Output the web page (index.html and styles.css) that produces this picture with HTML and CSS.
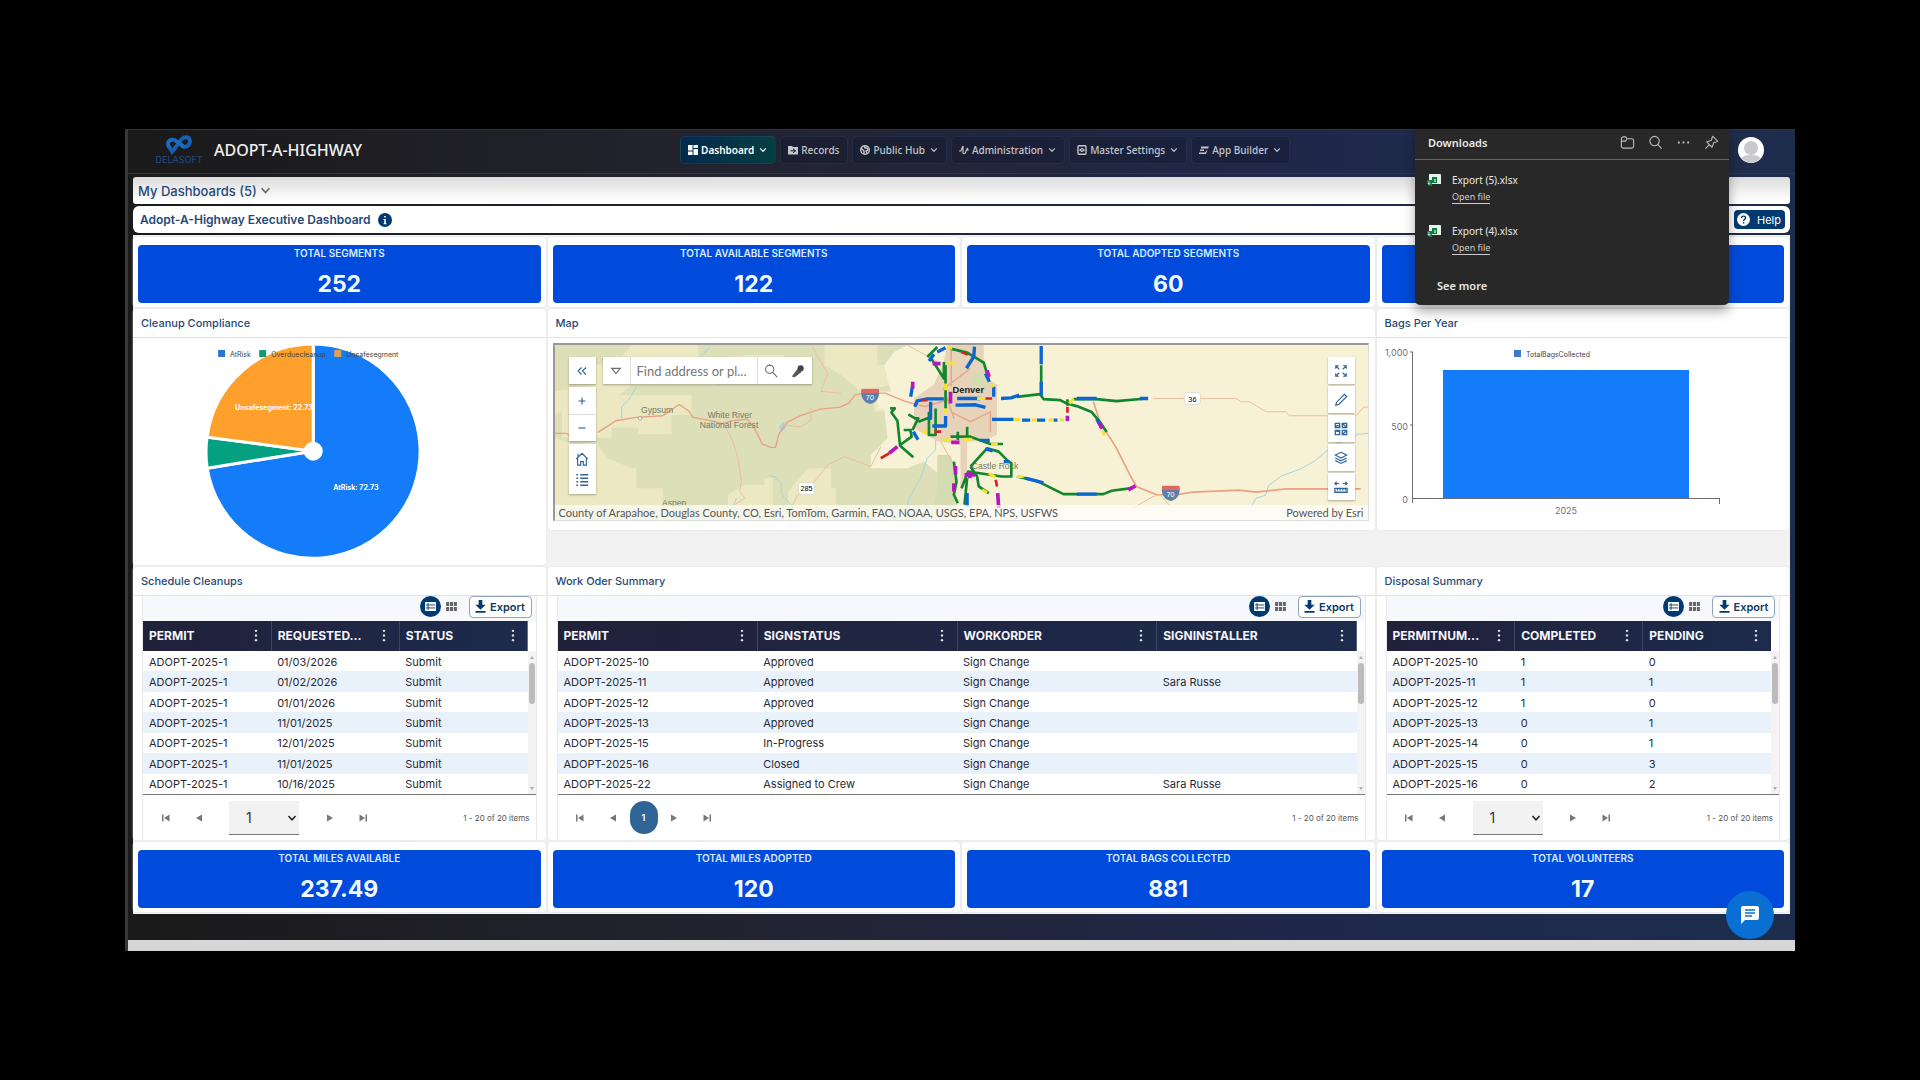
FILE: index.html
```
<!DOCTYPE html>
<html lang="en">
<head>
    <meta charset="UTF-8">
    <meta name="viewport" content="width=device-width, initial-scale=1.0">
    <title>Adopt-A-Highway</title>
    <link rel="stylesheet" href="styles.css">
</head>
<body>
    <!-- shared icons -->
    <svg class="sprite" aria-hidden="true">
        <symbol id="chevron" viewBox="0 0 10 10"><path d="M1.500 3l3.500 3.800L8.500 3" fill="none" stroke="currentColor" stroke-width="1.500"/></symbol>
        <symbol id="list" viewBox="0 0 12 10"><path d="M0 0h12v10H0z" fill="#fff"/><path d="M1 3.300h10M1 6.600h10M3.300 1v8" stroke="#003a70" stroke-width="1"/></symbol>
        <symbol id="cells" viewBox="0 0 12 10"><path d="M0 0h3.400v4.500H0zM4.300 0h3.400v4.500H4.300zM8.600 0H12v4.500H8.600zM0 5.500h3.400V10H0zM4.300 5.500h3.400V10H4.300zM8.600 5.500H12V10H8.600z" fill="#666"/></symbol>
        <symbol id="download" viewBox="0 0 12 14"><path d="M4 0h4v5h3.600L6 10.500.400 5H4zM.500 12h11v1.800H.500z" fill="#003a70"/></symbol>
        <symbol id="dots" viewBox="0 0 4 14"><circle cx="2" cy="2" r="1.300"/><circle cx="2" cy="7" r="1.300"/><circle cx="2" cy="12" r="1.300"/></symbol>
        <symbol id="first" viewBox="0 0 8 8"><path d="M0 .5h1.500v7H0zM7.500.5v7L2 4z"/></symbol>
        <symbol id="prev" viewBox="0 0 8 8"><path d="M7 .5v7L1 4z"/></symbol>
        <symbol id="next" viewBox="0 0 8 8"><path d="M1 .5v7L7 4z"/></symbol>
        <symbol id="last" viewBox="0 0 8 8"><path d="M6.500.5H8v7H6.500zM.500.5v7L6 4z"/></symbol>
        <symbol id="excel" viewBox="0 0 14 12"><path d="M2 0h11a1 1 0 0 1 1 1v9H2z" fill="#e4f2e9"/><path d="M5 3h5v6H5z" fill="#0e7a41"/><path d="M7 5h2v3H7z" fill="#7ecb9d"/><path d="M0 6h5v6H2L0 9z" fill="#107c41"/><path d="M2 7v3M1 9l1 1.500L3.500 9" stroke="#fff" stroke-width=".7" fill="none"/></symbol>
    </svg>

    <div class="app">
        <header class="topbar">
            <div class="logo">
                <svg viewBox="0 0 74 60" width="26" height="21"><path d="M24 42L42 18C50 7 65 6 68 18C70 32 55 42 46 33L34 24" fill="none" stroke="#1560b4" stroke-width="11"/><path d="M52 38L30 21C18 11 4 18 6 31C7 38 12 42 18 49" fill="none" stroke="#1a6cc6" stroke-width="11"/><path d="M4 34L16 60L32 42L26 32L17 42z" fill="#1560b4"/></svg>
                <span class="logo-text">DELASOFT</span>
            </div>
            <h1 class="app-name">ADOPT-A-HIGHWAY</h1>
            <nav class="menu">
                <button class="menu-item active"><svg viewBox="0 0 10 10" width="10" height="10"><path d="M0 0h4.500v5.500H0zM0 6.500h4.500V10H0zM5.500 0H10v3H5.500zM5.500 4H10v6H5.500z" fill="currentColor"/></svg>Dashboard<svg class="chev"><use href="#chevron"/></svg></button>
                <button class="menu-item"><svg viewBox="0 0 10 10" width="10" height="10"><path d="M0 1h4l1 1h5v7.500H0z" fill="currentColor"/><path d="M2.500 5.800h5M5 3.800l2.500 2L5 7.800" stroke="#1b1c26" fill="none"/></svg>Records</button>
                <button class="menu-item"><svg viewBox="0 0 10 10" width="10" height="10"><circle cx="5" cy="5" r="4.300" fill="none" stroke="currentColor" stroke-width="1.400"/><path d="M1 3l3 3v3M4 1l1 2h2l1 2-2 1 1 2" fill="none" stroke="currentColor" stroke-width="1.400"/></svg>Public Hub<svg class="chev"><use href="#chevron"/></svg></button>
                <button class="menu-item"><svg viewBox="0 0 10 10" width="10" height="10"><path d="M0 6h1.800L4 1v7.500M4 8.500h2L8.500 3v2H10" fill="none" stroke="currentColor" stroke-width="1.200"/></svg>Administration<svg class="chev"><use href="#chevron"/></svg></button>
                <button class="menu-item"><svg viewBox="0 0 10 10" width="10" height="10"><rect x="1" y=".7" width="8" height="8.600" rx="1" fill="none" stroke="currentColor" stroke-width="1.400"/><circle cx="5" cy="5" r="1.600" fill="none" stroke="currentColor"/><path d="M2 5h6" stroke="currentColor"/></svg>Master Settings<svg class="chev"><use href="#chevron"/></svg></button>
                <button class="menu-item"><svg viewBox="0 0 10 10" width="10" height="10"><path d="M2 1.500h8L9 3.500H2zM1 4.500h4v1.500H1zM0 7.500h6l2.500-3L7 9H0z" fill="currentColor"/></svg>App Builder<svg class="chev"><use href="#chevron"/></svg></button>
            </nav>
            <svg class="avatar" viewBox="0 0 26 26"><circle cx="13" cy="13" r="13" fill="#fff"/><path d="M3.500 21.500a13 13 0 0 0 19 0c-2-3-5-3.500-9.500-3.500s-7.500.5-9.500 3.500z" fill="#c9c9ce"/><circle cx="13" cy="11" r="7" fill="#c9c9ce"/></svg>
        </header>

        <main class="content">
            <div class="bar bar-list"><button class="plain">My Dashboards (5)<svg class="chev-lg"><use href="#chevron"/></svg></button></div>
            <div class="bar bar-title">
                <h2>Adopt-A-Highway Executive Dashboard</h2>
                <svg viewBox="0 0 14 14" width="14" height="14"><circle cx="7" cy="7" r="7" fill="#003a70"/><path d="M6.200 3h1.600v1.600H6.200zM5.500 6h2.300v4.200h.7v1h-3v-1h.7V7h-.7z" fill="#fff"/></svg>
                <button class="help"><svg viewBox="0 0 14 14" width="13" height="13"><circle cx="7" cy="7" r="7" fill="#fff"/><path d="M4.900 5.500C5 2.600 9.200 2.800 9.200 5.300 9.200 6.900 7.100 6.800 7.100 8.600M7.100 9.700v1.600" fill="none" stroke="#003a70" stroke-width="1.500"/></svg>Help</button>
            </div>

            <div class="grid">
                <section class="tile"><div class="kpi"><h3>TOTAL SEGMENTS</h3><p>252</p></div></section>
                <section class="tile"><div class="kpi"><h3>TOTAL AVAILABLE SEGMENTS</h3><p>122</p></div></section>
                <section class="tile"><div class="kpi"><h3>TOTAL ADOPTED SEGMENTS</h3><p>60</p></div></section>
                <section class="tile"><div class="kpi"></div></section>

                <section class="panel">
                    <h3>Cleanup Compliance</h3>
                    <svg class="pie" viewBox="0 0 412 226" preserveAspectRatio="xMinYMin">
                        <g transform="translate(180 113)" stroke="#fff" stroke-width="3">
                            <path d="M0 0V-107A107 107 0 1 1-105.900 17z" fill="#147cf8"/>
                            <path d="M0 0L-105.900 17A107 107 0 0 1-106-14z" fill="#03a182"/>
                            <path d="M0 0L-106-14A107 107 0 0 1 0-107z" fill="#ffa02c"/>
                            <circle r="8" fill="#fff"/>
                        </g>
                        <path d="M85 12h7v7h-7z" fill="#2877d8"/>
                        <path d="M126 12h7v7h-7z" fill="#149b73"/>
                        <path d="M201 12h7v7h-7z" fill="#dda055"/>
                        <g class="legend">
                            <text x="97" y="19">AtRisk</text>
                            <text x="138" y="19">Overduecleanup</text>
                            <text x="213" y="19">Unsafesegment</text>
                        </g>
                        <g class="slice-label">
                            <text x="102" y="72">Unsafesegment: 22.73</text>
                            <text x="200" y="152">AtRisk: 72.73</text>
                        </g>
                    </svg>
                </section>

                <section class="panel wide">
                    <h3>Map</h3>
                    <div class="map">
                        <svg class="map-canvas" viewBox="39 99 2448 534" preserveAspectRatio="xMinYMin slice">
                            <path d="M39 99h2448v534H39z" fill="#dddfb9"/>
                            <!-- open land -->
                            <g fill="#ebe8c2">
                                <path d="M270 99h200v40h60l90-10h110v30l-60 30h-60V200H600l-90 20H270l-40 30h220v60h-60v58H290v-20h-80v30H60v-80l-21 10v-70l120-20v-60h60z"/>
                                <path d="M39 380l60 20 60-10 40 50 70 30h15v60h80v60H39z"/>
                                <path d="M850 99h160v60h40v60l-90 20-60-50-50-30z"/>
                                <path d="M560 550l50-30h60v-20h24v90H560zM800 470h70v60h15v60H740v-50z"/>
                                <path d="M1000 240h40v60h-40z"/>
                            </g>
                            <path d="M1100 99h1387v534H1250V560l-40-60-60-50-50 20h-110v-40l50-50-10-90h-20v-50h40l-20-80 30-40z" fill="#f7f1d5"/>
                            <path d="M1190 430h40l20 60-20 143h-60l20-100z" fill="#d5dcb1"/>
                            <path d="M1220 99h110v90l40 30v150l-40 20h-50v130l-20 20v-140l-70-10-70-40v-90l60-40 30-70z" fill="#e7d3b9"/>
                            <path d="M1290 190l50-20v50l-40 20z" fill="#d5dcb1"/>
                            <!-- rivers -->
                            <g fill="none" stroke="#a7d3dc" stroke-width="3">
                                <path d="M505 104l-30 35M285 225l-25 40-20 20v35M685 492l20 5 15 20v30l35 40M1185 385v30l-25 25-20 60-35 60-5 25M585 560l-10 30"/>
                                <path d="M2487 365l-35 3-5 10-60 20-60 50-45 25-55 20-40 30-8 28-30 10-15 30"/>
                                <path d="M715 345l12-14 8 14-14 14z" fill="#a7d3dc"/>
                            </g>
                            <!-- roads -->
                            <g fill="none" stroke="#e9a184" stroke-width="4">
                                <path d="M39 365h35l12 10M168 362l55-35 60-10 80-5 50-34 30 20 10 18 60 12 30 8 25-8 50-6 20 25 25 50 25 10h15l10-40 25-35 40-20 60-20 60-6 25-12 20-25 30-5h60l60 25 60 15 70-20"/>
                                <path d="M1660 270l20 60 50 80 40 80 20 35 60 25 60 0 50-8 140-6 50 6 90-10h225" stroke-width="5"/>
                                <path d="M1232 104v120M1290 170l-80 60 30 90M1230 300l60 30 60-30v60"/>
                            </g>
                            <g fill="none" stroke="#ecbda0" stroke-width="3">
                                <path d="M545 330l30 60 15 50 10 70-5 30 15 20-30 20M720 340l60 5 30-20v-35M815 104l15 30 30 50-20 55 60 5M750 590l20-40 50-40 40-50 50-25 80 30 30-60M1100 99l90 50M1200 390l40 70"/>
                                <path d="M1840 260h250l15 10h25l50 30h60l10 12h200l25-26h12M1780 590l60-35 20-5 35 37"/>
                            </g>
                            <g class="map-label">
                                <text x="298" y="304">Gypsum</text>
                                <text x="498" y="318">White River</text>
                                <text x="475" y="350">National Forest</text>
                                <text x="361" y="584">Aspen</text>
                                <text x="1294" y="471">Castle Rock</text>
                            </g>
                            <circle cx="295" cy="320" r="5" fill="#fff" stroke="#888" stroke-width="2"/>
                            <!-- adopted segments -->
                            <g fill="none" stroke-width="8" stroke-linejoin="round">
                                <g stroke="#12862d">
                                    <path d="M1048 290h14l-10 12 18 25 8 75 40 35M1078 400l35-25-4-20h-20M1115 355l18-35h-10l-20-12M1133 330l40-15M1160 135l30-30M1172 140l38 60V150M1165 300v70h20v-80M1215 160v130M1240 450l8 60-8 40 12 25"/>
                                    <path d="M1230 110l50 12 50 30 15 50M1503 160v90M1430 255l70-8 10 15 50 3 20 10 30 8 45 18 25 30 20 30M1600 262h70l60 6 90-8M1582 262v20M1230 375h60l60 22h38M1280 345v40M1252 360v25"/>
                                    <path d="M1290 465l50-55 35 10 30 30 8 5v40h-30l-100-15-20 50M1290 465l20 30 5 30 30 20M1430 495l60 13 80 40h120l25-10 60-8M1280 500l-8 80"/>
                                </g>
                                <g stroke="#0b66d4" stroke-width="10">
                                    <path d="M1115 225l-5 30M1122 285l8-18 30-6h50M1170 270v50h-10M1175 343h40v-30M1118 360l14 24M1190 120l25-13M1165 147l15-20"/>
                                    <path d="M1503 102v55M1503 210v42M1382 260l30-2 25-8M1610 260h60M1800 260h25M1355 323h65M1445 325h25M1490 325h25M1540 325h12M1250 260h70M1245 280l60-1 30 8M1360 225v30M1302 104l-2 30-22 35M1335 185l12 25M1670 322l14 25M1318 386h30M1335 412l22 6M1455 500l55 14M1610 548h60M1390 450h18M1280 545v40"/>
                                </g>
                                <g stroke="#f6e52e" stroke-width="9">
                                    <path d="M1220 108h15M1215 215v20M1215 290v15M1220 153h22M1205 385h25M1145 360h14M1270 383h25M1600 260l-12 15M1420 323h20M1475 325h14M1525 325h15M1558 325h14M1310 260h30M1355 217v10M1352 398h20M1430 495h20M1687 357l6 14M1345 485l20 12M1325 535l15 8"/>
                                </g>
                                <g stroke="#b317bd" stroke-width="11">
                                    <path d="M1116 210v20M1070 405l-25 20M1176 155h24M1230 240v35M1232 392h25M1245 463v26M1240 515v25M1272 490h32M1340 175l6 20M1582 312v16M1678 333l8 18M1765 535l22-12M1372 545l3 45M1288 480v20"/>
                                </g>
                                <path stroke="#d52326" d="M1045 425l-25 15M1145 265h16M1182 360h20M1262 120l20 8M1582 285v18M1335 260h20M1366 505l4 20"/>
                            </g>
                            <text class="map-city" x="1236" y="245">Denver</text>
                            <!-- shields -->
                            <g class="shield">
                                <path d="M962 234h52c4 22-6 38-26 43-20-5-30-21-26-43z" fill="#5b7fa8"/><path d="M962 231h52v13h-52z" fill="#dd6a62"/><text x="975" y="265" fill="#fff">70</text>
                                <path d="M1867 526h52c4 22-6 38-26 43-20-5-30-21-26-43z" fill="#5b7fa8"/><path d="M1867 523h52v13h-52z" fill="#dd6a62"/><text x="1880" y="558" fill="#fff">70</text>
                                <rect x="772" y="513" width="48" height="36" rx="8" fill="#fff" stroke="#aaa"/><text x="778" y="540">285</text>
                                <rect x="1934" y="242" width="48" height="36" rx="8" fill="#fff" stroke="#aaa"/><text x="1946" y="270">36</text>
                            </g>
                        </svg>
                        <div class="map-left">
                            <div class="map-col">
                                <button class="tool" aria-label="Collapse"><svg viewBox="0 0 16 16"><path d="M7.500 4L3.500 8l4 4M12.500 4l-4 4 4 4"/></svg></button>
                                <div class="tool-group">
                                    <button class="tool" aria-label="Zoom in"><svg viewBox="0 0 16 16"><path d="M8 4v8M4 8h8"/></svg></button>
                                    <button class="tool" aria-label="Zoom out"><svg viewBox="0 0 16 16"><path d="M4 8h8"/></svg></button>
                                </div>
                                <div class="tool-group tight">
                                    <button class="tool" aria-label="Home"><svg viewBox="0 0 16 16"><path d="M1.500 8L8 1.500 14.500 8M3 7v8h3.500v-4h3v4H13V7M3.500 5V2"/></svg></button>
                                    <button class="tool" aria-label="Legend"><svg viewBox="0 0 16 16"><path d="M6 2h9M6 6h9M6 10h9M6 14h9M1.500 2h2M1.500 6h2M1.500 10h2M1.500 14h2" stroke-width="1.800"/></svg></button>
                                </div>
                            </div>
                            <div class="search">
                                <button class="tool" aria-label="Search in"><svg viewBox="0 0 16 16" class="grey"><path d="M3 5h10l-5 6z"/></svg></button>
                                <input type="text" aria-label="Find address or place" placeholder="Find address or pl...">
                                <button class="tool" aria-label="Search"><svg viewBox="0 0 16 16" class="grey"><circle cx="6.500" cy="6" r="4.700"/><path d="M10 9.500l5 5.500"/></svg></button>
                                <button class="tool" aria-label="Speak"><svg viewBox="0 0 16 16"><path d="M8 6l3 3-7 5.500L2 14z" fill="#555" stroke="#555"/><circle cx="11" cy="5" r="3.500" fill="#4a4050" stroke="none"/></svg></button>
                            </div>
                        </div>
                        <div class="map-right">
                            <button class="tool" aria-label="Full screen"><svg viewBox="0 0 16 16"><path d="M2 5.500V2h3.500M2 2l4 4M10.500 2H14v3.500M14 2l-4 4M2 10.500V14h3.500M2 14l4-4M14 10.500V14h-3.500M14 14l-4-4"/></svg></button>
                            <button class="tool" aria-label="Edit"><svg viewBox="0 0 16 16"><path d="M2 14l1-3.500 9-9 2.500 2.500-9 9z"/></svg></button>
                            <button class="tool" aria-label="Basemaps"><svg viewBox="0 0 16 16"><path d="M1.500 1.500h5v5h-5zM9.500 1.500h5v5h-5zM1.500 9.500h5v5h-5zM9.500 9.500h5v5h-5zM2 5l2-1 2 1M10 2l4 4M2 10l4 1M10 14l4-4" stroke-width="1.500"/></svg></button>
                            <button class="tool" aria-label="Layers"><svg viewBox="0 0 16 16"><path d="M8 1.500l6.500 3.200L8 8 1.500 4.700zM1.500 8L8 11.200 14.500 8M1.500 11L8 14.200l6.500-3.200"/></svg></button>
                            <button class="tool" aria-label="Measure"><svg viewBox="0 0 16 16"><path d="M1 4h5M3 2L1 4l2 2M10 4h5M13 2l2 2-2 2"/><path d="M1 9.500h14V14H1zM4 10v2M7 10v2M10 10v2M13 10v2" stroke-width="1.500"/></svg></button>
                        </div>
                        <div class="attribution">
                            <span>County of Arapahoe, Douglas County, CO, Esri, TomTom, Garmin, FAO, NOAA, USGS, EPA, NPS, USFWS</span>
                            <span>Powered by Esri</span>
                        </div>
                    </div>
                </section>

                <section class="panel">
                    <h3>Bags Per Year</h3>
                    <svg class="bars" viewBox="0 0 412 192" preserveAspectRatio="xMinYMin">
                        <path d="M66 32h246v128H66z" fill="#147cf8"/>
                        <path d="M33 14h3M33 87h3M35.500 14v151M35 160.500h308M342.500 160v6" fill="none" stroke="#6b6b78"/>
                        <path d="M137 12h7v7h-7z" fill="#3c7acb"/>
                        <g class="legend"><text x="149" y="19">TotalBagsCollected</text></g>
                        <g class="axis">
                            <text x="31" y="18" text-anchor="end">1,000</text>
                            <text x="31" y="92" text-anchor="end">500</text>
                            <text x="31" y="165" text-anchor="end">0</text>
                            <text x="189" y="176" text-anchor="middle">2025</text>
                        </g>
                    </svg>
                </section>

                <section class="panel">
                    <h3>Schedule Cleanups</h3>
                    <div class="report">
                        <div class="toolbar">
                            <button class="view on" aria-label="List view"><svg><use href="#list"/></svg></button>
                            <button class="view" aria-label="Grid view"><svg><use href="#cells"/></svg></button>
                            <button class="export"><svg><use href="#download"/></svg>Export</button>
                        </div>
                        <div class="rows">
                            <table>
                                <thead><tr><th>PERMIT<svg><use href="#dots"/></svg></th><th>REQUESTED...<svg><use href="#dots"/></svg></th><th>STATUS<svg><use href="#dots"/></svg></th></tr></thead>
                                <tbody>
                                    <tr><td>ADOPT-2025-1</td><td>01/03/2026</td><td>Submit</td></tr>
                                    <tr><td>ADOPT-2025-1</td><td>01/02/2026</td><td>Submit</td></tr>
                                    <tr><td>ADOPT-2025-1</td><td>01/01/2026</td><td>Submit</td></tr>
                                    <tr><td>ADOPT-2025-1</td><td>11/01/2025</td><td>Submit</td></tr>
                                    <tr><td>ADOPT-2025-1</td><td>12/01/2025</td><td>Submit</td></tr>
                                    <tr><td>ADOPT-2025-1</td><td>11/01/2025</td><td>Submit</td></tr>
                                    <tr><td>ADOPT-2025-1</td><td>10/16/2025</td><td>Submit</td></tr>
                                </tbody>
                            </table>
                            <div class="scroll"><i></i></div>
                        </div>
                        <div class="pager">
                            <button aria-label="First page"><svg><use href="#first"/></svg></button>
                            <button aria-label="Previous page"><svg><use href="#prev"/></svg></button>
                            <div class="page-select"><select aria-label="Page"><option>1</option></select><svg><use href="#chevron"/></svg></div>
                            <button aria-label="Next page"><svg><use href="#next"/></svg></button>
                            <button aria-label="Last page"><svg><use href="#last"/></svg></button>
                            <span>1 - 20 of 20 items</span>
                        </div>
                    </div>
                </section>

                <section class="panel wide">
                    <h3>Work Oder Summary</h3>
                    <div class="report">
                        <div class="toolbar">
                            <button class="view on" aria-label="List view"><svg><use href="#list"/></svg></button>
                            <button class="view" aria-label="Grid view"><svg><use href="#cells"/></svg></button>
                            <button class="export"><svg><use href="#download"/></svg>Export</button>
                        </div>
                        <div class="rows">
                            <table>
                                <thead><tr><th>PERMIT<svg><use href="#dots"/></svg></th><th>SIGNSTATUS<svg><use href="#dots"/></svg></th><th>WORKORDER<svg><use href="#dots"/></svg></th><th>SIGNINSTALLER<svg><use href="#dots"/></svg></th></tr></thead>
                                <tbody>
                                    <tr><td>ADOPT-2025-10</td><td>Approved</td><td>Sign Change</td><td></td></tr>
                                    <tr><td>ADOPT-2025-11</td><td>Approved</td><td>Sign Change</td><td>Sara Russe</td></tr>
                                    <tr><td>ADOPT-2025-12</td><td>Approved</td><td>Sign Change</td><td></td></tr>
                                    <tr><td>ADOPT-2025-13</td><td>Approved</td><td>Sign Change</td><td></td></tr>
                                    <tr><td>ADOPT-2025-15</td><td>In-Progress</td><td>Sign Change</td><td></td></tr>
                                    <tr><td>ADOPT-2025-16</td><td>Closed</td><td>Sign Change</td><td></td></tr>
                                    <tr><td>ADOPT-2025-22</td><td>Assigned to Crew</td><td>Sign Change</td><td>Sara Russe</td></tr>
                                </tbody>
                            </table>
                            <div class="scroll"><i></i></div>
                        </div>
                        <div class="pager">
                            <button aria-label="First page"><svg><use href="#first"/></svg></button>
                            <button aria-label="Previous page"><svg><use href="#prev"/></svg></button>
                            <button class="current">1</button>
                            <button aria-label="Next page"><svg><use href="#next"/></svg></button>
                            <button aria-label="Last page"><svg><use href="#last"/></svg></button>
                            <span>1 - 20 of 20 items</span>
                        </div>
                    </div>
                </section>

                <section class="panel">
                    <h3>Disposal Summary</h3>
                    <div class="report">
                        <div class="toolbar">
                            <button class="view on" aria-label="List view"><svg><use href="#list"/></svg></button>
                            <button class="view" aria-label="Grid view"><svg><use href="#cells"/></svg></button>
                            <button class="export"><svg><use href="#download"/></svg>Export</button>
                        </div>
                        <div class="rows">
                            <table>
                                <thead><tr><th>PERMITNUM...<svg><use href="#dots"/></svg></th><th>COMPLETED<svg><use href="#dots"/></svg></th><th>PENDING<svg><use href="#dots"/></svg></th></tr></thead>
                                <tbody>
                                    <tr><td>ADOPT-2025-10</td><td>1</td><td>0</td></tr>
                                    <tr><td>ADOPT-2025-11</td><td>1</td><td>1</td></tr>
                                    <tr><td>ADOPT-2025-12</td><td>1</td><td>0</td></tr>
                                    <tr><td>ADOPT-2025-13</td><td>0</td><td>1</td></tr>
                                    <tr><td>ADOPT-2025-14</td><td>0</td><td>1</td></tr>
                                    <tr><td>ADOPT-2025-15</td><td>0</td><td>3</td></tr>
                                    <tr><td>ADOPT-2025-16</td><td>0</td><td>2</td></tr>
                                </tbody>
                            </table>
                            <div class="scroll"><i></i></div>
                        </div>
                        <div class="pager">
                            <button aria-label="First page"><svg><use href="#first"/></svg></button>
                            <button aria-label="Previous page"><svg><use href="#prev"/></svg></button>
                            <div class="page-select"><select aria-label="Page"><option>1</option></select><svg><use href="#chevron"/></svg></div>
                            <button aria-label="Next page"><svg><use href="#next"/></svg></button>
                            <button aria-label="Last page"><svg><use href="#last"/></svg></button>
                            <span>1 - 20 of 20 items</span>
                        </div>
                    </div>
                </section>

                <section class="tile"><div class="kpi"><h3>TOTAL MILES AVAILABLE</h3><p>237.49</p></div></section>
                <section class="tile"><div class="kpi"><h3>TOTAL MILES ADOPTED</h3><p>120</p></div></section>
                <section class="tile"><div class="kpi"><h3>TOTAL BAGS COLLECTED</h3><p>881</p></div></section>
                <section class="tile"><div class="kpi"><h3>TOTAL VOLUNTEERS</h3><p>17</p></div></section>
            </div>
        </main>
        <footer class="footer"></footer>

        <button class="chat" aria-label="Chat"><svg viewBox="0 0 20 20" width="20" height="20"><path d="M3 1h14a2 2 0 0 1 2 2v10a2 2 0 0 1-2 2H5l-4 4V3a2 2 0 0 1 2-2z" fill="#fff"/><path d="M5 5h10M5 8h10M5 11h7" stroke="#0a6fd2" stroke-width="1.600"/></svg></button>

        <aside class="downloads">
            <div class="downloads-head">
                <h2>Downloads</h2>
                <button aria-label="Open folder"><svg viewBox="0 0 16 16"><path d="M1.500 4a2 2 0 0 1 2-2H6l1.500 2h5a2 2 0 0 1 2 2v6a2 2 0 0 1-2 2h-9a2 2 0 0 1-2-2zM2 6.500h4L7.500 4"/></svg></button>
                <button aria-label="Search"><svg viewBox="0 0 16 16"><circle cx="7" cy="6.500" r="5"/><path d="M10.500 10l4 4.500"/></svg></button>
                <button aria-label="More"><svg viewBox="0 0 16 16"><path d="M2 8h2M7 8h2M12 8h2" stroke-width="2"/></svg></button>
                <button aria-label="Pin"><svg viewBox="0 0 16 16"><path d="M9.500 1.500l5 5-1.500 1-2.500.5-2 5-5.500-5.500 5-2 .5-2.500zM5.500 10.500l-4 4"/></svg></button>
            </div>
            <ul>
                <li><svg><use href="#excel"/></svg><div>Export (5).xlsx<a href="#">Open file</a></div></li>
                <li><svg><use href="#excel"/></svg><div>Export (4).xlsx<a href="#">Open file</a></div></li>
            </ul>
            <button class="more">See more</button>
        </aside>
    </div>
</body>
</html>
```
FILE: styles.css
```
* {
  box-sizing: border-box;
}

body {
  margin: 0;
  padding: 129px 125px;
  background: #000;
  font-family: Inter, "Liberation Sans", sans-serif;
  font-size: 11px;
  color: #222;
}

h1, h2, h3, p, ul {
  margin: 0;
  padding: 0;
}

button {
  border: 0;
  padding: 0;
  background: none;
  font: inherit;
  color: inherit;
}

svg {
  flex: none;
}

.sprite {
  display: none;
}

.app {
  position: relative;
  border-left: 3px solid #393939;
  background: linear-gradient(90deg, #1a1a1a, #23232f 35%, #20284a 70%, #1d2d4c);
}

/* top bar */
.topbar {
  display: flex;
  align-items: center;
  height: 45px;
  padding: 0 31px 4px 29px;
  border-top: 1px solid #33333a;
  border-bottom: 1px solid #35353d;
  font-family: "Noto Sans", sans-serif;
}

.logo {
  display: flex;
  flex-direction: column;
  align-items: center;
  width: 44px;
}

.logo-text {
  color: #1b4f87;
  font: 9px/10px Inter, sans-serif;
}

.app-name {
  margin-left: 13px;
  color: #f0f0f0;
  font-size: 16px;
  font-weight: 500;
}

.menu {
  display: flex;
  gap: 4px;
  margin: 0 auto 0 318px;
}

.menu-item {
  display: flex;
  align-items: center;
  gap: 3px;
  height: 28px;
  padding: 0 8px 0 7px;
  border: 1px solid rgba(90, 130, 190, 0.15);
  border-radius: 5px;
  background: rgba(10, 20, 40, 0.3);
  color: #c3c6cd;
  font-size: 10px;
  font-weight: 500;
}

.menu-item.active {
  background: linear-gradient(90deg, #04294d, #063e41);
  color: #fff;
  font-weight: 600;
}

.chev {
  width: 8px;
  height: 8px;
  margin-left: 2px;
}

.avatar {
  width: 26px;
  height: 26px;
}

/* dashboard bars */
.content {
  margin: 3px 5px 0 5px;
}

.bar {
  display: flex;
  align-items: center;
  height: 27px;
  margin-bottom: 2px;
  padding: 0 5px;
  border-radius: 6px;
  background: #fff;
  color: #1f4a76;
}

.bar-list {
  border-radius: 3px;
  background: linear-gradient(#dcdcdc, #fff 90%);
}

.plain {
  display: flex;
  align-items: center;
  gap: 3px;
  font-size: 13px;
  font-weight: 500;
}

.chev-lg {
  width: 11px;
  height: 11px;
  color: #666;
}

.bar-title h2 {
  margin: 0 7px 0 2px;
  font-size: 12px;
  font-weight: 600;
}

.help {
  display: flex;
  align-items: center;
  gap: 7px;
  height: 19px;
  margin-left: auto;
  padding: 0 4px 0 3px;
  border-radius: 4px;
  background: #003a70;
  color: #fff;
  font-size: 11px;
}

/* dashboard grid */
.grid {
  display: grid;
  grid-template-columns: repeat(4, minmax(0, 1fr));
  gap: 2px;
  padding: 2px 1px 2px 0;
  background: #f2f2f2;
  align-items: start;
}

.tile,
.panel {
  border-radius: 4px;
  background: #fff;
  box-shadow: 0 0 2px #ddd;
}

.tile {
  padding: 8px 5px 4px;
}

.wide {
  grid-column: span 2;
}

.kpi {
  height: 58px;
  border-radius: 4px;
  background: #004bdb;
  color: #d9ecff;
  text-align: center;
}

.kpi h3 {
  font-size: 10px;
  font-weight: 600;
  line-height: 16px;
}

.kpi p {
  color: #f2faff;
  font-size: 23px;
  font-weight: 700;
  line-height: 46px;
}

.panel > h3 {
  height: 29px;
  padding-left: 8px;
  border-bottom: 1px solid #e2e2e6;
  color: #1f4a76;
  font-size: 11px;
  font-weight: 500;
  line-height: 28px;
}

/* charts */
.pie,
.bars {
  display: block;
  width: 100%;
  height: 227px;
}

.bars {
  height: 192px;
}

.legend {
  fill: #444;
  font-size: 7px;
}

.slice-label {
  fill: #fff;
  font-size: 7px;
  font-weight: 700;
}

.axis {
  fill: #70707c;
  font-size: 9px;
}

/* map */
.map {
  position: relative;
  height: 178px;
  margin: 5px 6px 9px 5px;
  border: 1px solid #ddd;
  border-top: 2px solid #999;
  border-left: 2px solid #999;
  overflow: hidden;
}

.map-canvas {
  position: absolute;
  inset: 0;
  width: 100%;
  height: 100%;
}

.map-label,
.map-city,
.shield {
  font-family: "Liberation Sans", sans-serif;
  font-size: 26px;
}

.map-label {
  fill: #777764;
}

.map-city {
  fill: #222;
  font-size: 28px;
  font-weight: 600;
}

.shield text {
  font-size: 22px;
}

.map-left {
  position: absolute;
  top: 12px;
  left: 14px;
  display: flex;
  align-items: flex-start;
  gap: 7px;
}

.map-right {
  position: absolute;
  top: 12px;
  right: 13px;
}

.map-col,
.map-right {
  display: flex;
  flex-direction: column;
  gap: 3px;
}

.map-right {
  gap: 2px;
}

.tool {
  display: flex;
  align-items: center;
  justify-content: center;
  width: 27px;
  height: 27px;
  background: #fff;
  box-shadow: 0 1px 2px rgba(0, 0, 0, 0.3);
}

.tool svg {
  width: 14px;
  height: 14px;
  fill: none;
  stroke: #2f6496;
  stroke-width: 1.3;
}

.tool .grey {
  stroke: #6e6e6e;
}

.tool-group,
.search {
  background: #fff;
  box-shadow: 0 1px 2px rgba(0, 0, 0, 0.3);
}

.tool-group .tool,
.search .tool {
  box-shadow: none;
}

.tool-group .tool + .tool {
  border-top: 1px solid #ddd;
}

.tight {
  padding: 4px 0;
}

.tight .tool {
  height: 21px;
}

.tight .tool + .tool {
  border-top: 0;
}

.search {
  display: flex;
}

.search input {
  width: 128px;
  padding: 0 6px;
  border: 1px solid #ddd;
  border-width: 0 1px;
  font: 13px Lato, sans-serif;
}

.search input::placeholder {
  color: #777;
}

.attribution {
  position: absolute;
  right: 0;
  bottom: 0;
  left: 0;
  display: flex;
  justify-content: space-between;
  padding: 0 4px;
  background: rgba(255, 255, 255, 0.7);
  color: #555;
  font: 11px/15px Lato, sans-serif;
}

/* reports */
.report {
  margin: 0 9px;
  border-right: 1px solid #e8e8ee;
  border-left: 1px solid #e8e8ee;
}

.toolbar {
  display: flex;
  align-items: center;
  justify-content: flex-end;
  height: 25px;
  padding: 0 4px 4px 0;
  background: #f7f8fc;
}

.view {
  display: flex;
  align-items: center;
  justify-content: center;
  width: 21px;
  height: 21px;
  border-radius: 50%;
}

.view.on {
  background: #003a70;
}

.view svg {
  width: 11px;
  height: 9px;
}

.export {
  display: flex;
  align-items: center;
  justify-content: center;
  gap: 4px;
  width: 63px;
  height: 22px;
  margin-left: 7px;
  border: 1px solid #8fa6bd;
  border-radius: 4px;
  background: #fff;
  color: #0f3a66;
  font-size: 11px;
  font-weight: 600;
}

.export svg {
  width: 11px;
  height: 13px;
}

.rows {
  display: flex;
  border-bottom: 1px solid #777;
}

table {
  width: 100%;
  height: 173px;
  border-collapse: collapse;
  table-layout: fixed;
}

th,
td {
  padding: 0 6px;
  text-align: left;
  white-space: nowrap;
}

thead tr {
  height: 30px;
  background: linear-gradient(90deg, #21213a, #1d2b4c);
}

th {
  position: relative;
  padding-bottom: 1px;
  border-right: 1px solid #3c4561;
  color: #f4f4f8;
  font-size: 12px;
  font-weight: 700;
}

th svg {
  position: absolute;
  top: 8px;
  right: 13px;
  width: 4px;
  height: 13px;
  fill: #ddd;
}

th:last-child {
  border-right: 0;
}

td {
  padding-top: 1px;
  color: #2a2a33;
  font-size: 11px;
  line-height: 14px;
}

tbody tr:nth-child(even) {
  background: #e9f1fa;
}

.scroll {
  flex: none;
  display: flex;
  flex-direction: column;
  align-items: center;
  justify-content: space-between;
  width: 8px;
  margin-top: 30px;
  padding: 5px 1px 4px;
  background: #f3f3f3;
}

.scroll i {
  width: 6px;
  height: 41px;
  margin: 4px 0 auto;
  border-radius: 3px;
  background: #bbb;
}

.scroll::before,
.scroll::after {
  content: "";
  border: 2px solid transparent;
}

.scroll::before {
  border-top: 0;
  border-bottom: 3px solid #aaa;
}

.scroll::after {
  border-top: 3px solid #aaa;
  border-bottom: 0;
}

.pager {
  display: flex;
  align-items: center;
  height: 45px;
  padding: 0 6px;
}

.pager button {
  width: 33px;
  height: 33px;
}

.pager svg {
  width: 8px;
  height: 8px;
  fill: #777;
}

.pager span {
  margin-left: auto;
  color: #555;
  font-size: 8px;
}

.pager .current {
  width: 28px;
  border-radius: 14px;
  background: #2f6496;
  color: #fff;
  font-size: 9px;
  font-weight: 600;
}

.page-select {
  display: flex;
  align-items: center;
  margin: 0 14px;
  position: relative;
}

.page-select select {
  appearance: none;
  width: 70px;
  height: 34px;
  padding-left: 17px;
  border: 0;
  border-bottom: 1px solid #777;
  background: #f2f2f2;
  color: #333;
  font: 14px Inter, sans-serif;
}

.page-select svg {
  position: absolute;
  right: 2px;
  width: 10px;
  height: 10px;
  fill: none;
  color: #222;
}

.footer {
  height: 37px;
  border-bottom: 11px solid #d6d6d6;
}

/* floating parts */
.chat {
  position: absolute;
  right: 21px;
  bottom: 12px;
  display: flex;
  align-items: center;
  justify-content: center;
  width: 48px;
  height: 48px;
  border-radius: 50%;
  background: #0a6fd2;
}

.downloads {
  position: absolute;
  top: 0;
  right: 66px;
  width: 314px;
  height: 176px;
  border-radius: 0 0 5px 5px;
  background: #282828;
  box-shadow: 0 6px 12px rgba(0, 0, 0, 0.35);
  color: #e8e8e8;
  font: 10px/16px "Noto Sans", sans-serif;
}

.downloads-head {
  display: flex;
  align-items: center;
  gap: 13px;
  height: 31px;
  padding: 0 10px 3px 13px;
  border-bottom: 1px solid #666;
}

.downloads-head h2,
.more {
  font-size: 11px;
  font-weight: 600;
}

.downloads-head h2 {
  margin-right: auto;
}

.downloads-head button {
  height: 15px;
}

.downloads-head svg {
  width: 15px;
  height: 15px;
  fill: none;
  stroke: #bbb;
  stroke-width: 1.2;
}

.downloads li {
  display: flex;
  gap: 11px;
  height: 51px;
  padding: 12px 12px 0;
}

.downloads li svg {
  width: 14px;
  height: 12px;
  margin-top: 2px;
}

.downloads a {
  display: block;
  width: max-content;
  margin-top: 3px;
  border-bottom: 1px solid #ccc;
  color: #ccc;
  font-size: 9px;
  line-height: 12px;
  text-decoration: none;
}

.more {
  margin: 16px 22px;
}
```
